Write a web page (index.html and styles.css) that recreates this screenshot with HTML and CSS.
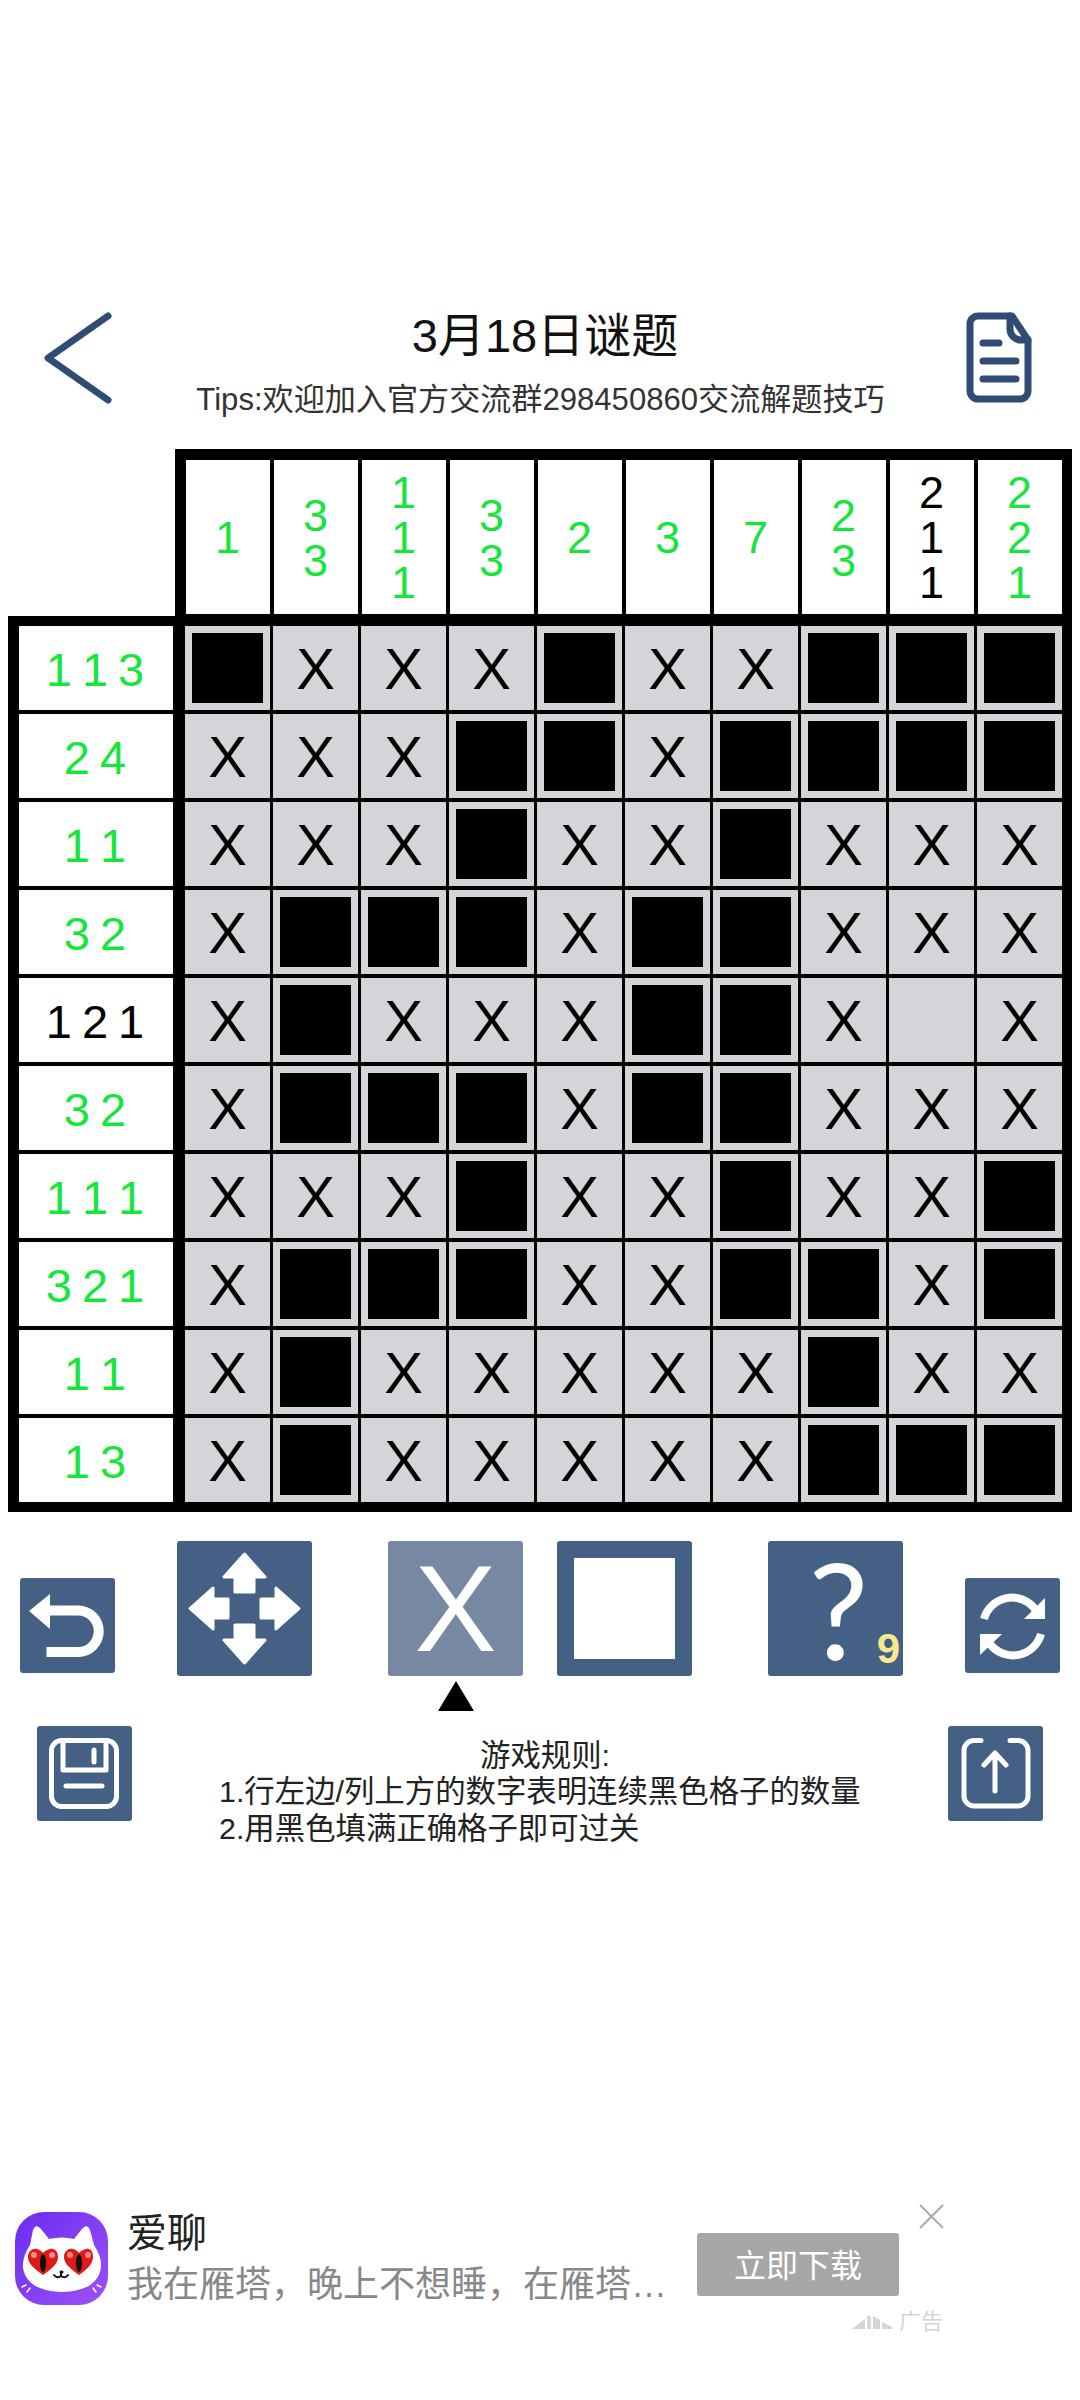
FILE: index.html
```html
<!DOCTYPE html>
<html lang="zh-CN">

<head>
    <meta charset="UTF-8" />
    <meta name="viewport" content="width=device-width, initial-scale=1.0" />
    <title>3月18日谜题</title>
    <link rel="stylesheet" href="styles.css">
</head>

<body>
    <header class="header">
        <svg class="back-icon" width="68" height="92" viewBox="0 0 68 92">
            <path d="M64 4 L4 46 L64 88" />
        </svg>
        <div class="heading">
            <h1 class="title">3月18日谜题</h1>
            <p class="tips">Tips:欢迎加入官方交流群298450860交流解题技巧</p>
        </div>
        <svg class="doc-icon" width="66" height="91" viewBox="0 0 66 91">
            <path d="M46 4 H12 a8 8 0 0 0 -8 8 V79 a8 8 0 0 0 8 8 H54 a8 8 0 0 0 8 -8 V28 Z" />
            <path d="M44 4 V17 a11 11 0 0 0 11 11 H62" />
            <path d="M17 31 H33 M17 49 H50 M17 67 H50" />
        </svg>
    </header>

    <!-- Column clues -->
    <section class="col-clues">
        <div class="col-clue">1</div>
        <div class="col-clue"><span>3</span><span>3</span></div>
        <div class="col-clue"><span>1</span><span>1</span><span>1</span></div>
        <div class="col-clue"><span>3</span><span>3</span></div>
        <div class="col-clue">2</div>
        <div class="col-clue">3</div>
        <div class="col-clue">7</div>
        <div class="col-clue"><span>2</span><span>3</span></div>
        <div class="col-clue done"><span>2</span><span>1</span><span>1</span></div>
        <div class="col-clue"><span>2</span><span>2</span><span>1</span></div>
    </section>

    <section class="board">
        <div class="row-clues">
            <div class="row-clue">1 1 3</div>
            <div class="row-clue">2 4</div>
            <div class="row-clue">1 1</div>
            <div class="row-clue">3 2</div>
            <div class="row-clue done">1 2 1</div>
            <div class="row-clue">3 2</div>
            <div class="row-clue">1 1 1</div>
            <div class="row-clue">3 2 1</div>
            <div class="row-clue">1 1</div>
            <div class="row-clue">1 3</div>
        </div>
        <div class="grid">
            <div class="cell on"></div><div class="cell">X</div><div class="cell">X</div><div class="cell">X</div><div class="cell on"></div><div class="cell">X</div><div class="cell">X</div><div class="cell on"></div><div class="cell on"></div><div class="cell on"></div>
            <div class="cell">X</div><div class="cell">X</div><div class="cell">X</div><div class="cell on"></div><div class="cell on"></div><div class="cell">X</div><div class="cell on"></div><div class="cell on"></div><div class="cell on"></div><div class="cell on"></div>
            <div class="cell">X</div><div class="cell">X</div><div class="cell">X</div><div class="cell on"></div><div class="cell">X</div><div class="cell">X</div><div class="cell on"></div><div class="cell">X</div><div class="cell">X</div><div class="cell">X</div>
            <div class="cell">X</div><div class="cell on"></div><div class="cell on"></div><div class="cell on"></div><div class="cell">X</div><div class="cell on"></div><div class="cell on"></div><div class="cell">X</div><div class="cell">X</div><div class="cell">X</div>
            <div class="cell">X</div><div class="cell on"></div><div class="cell">X</div><div class="cell">X</div><div class="cell">X</div><div class="cell on"></div><div class="cell on"></div><div class="cell">X</div><div class="cell"></div><div class="cell">X</div>
            <div class="cell">X</div><div class="cell on"></div><div class="cell on"></div><div class="cell on"></div><div class="cell">X</div><div class="cell on"></div><div class="cell on"></div><div class="cell">X</div><div class="cell">X</div><div class="cell">X</div>
            <div class="cell">X</div><div class="cell">X</div><div class="cell">X</div><div class="cell on"></div><div class="cell">X</div><div class="cell">X</div><div class="cell on"></div><div class="cell">X</div><div class="cell">X</div><div class="cell on"></div>
            <div class="cell">X</div><div class="cell on"></div><div class="cell on"></div><div class="cell on"></div><div class="cell">X</div><div class="cell">X</div><div class="cell on"></div><div class="cell on"></div><div class="cell">X</div><div class="cell on"></div>
            <div class="cell">X</div><div class="cell on"></div><div class="cell">X</div><div class="cell">X</div><div class="cell">X</div><div class="cell">X</div><div class="cell">X</div><div class="cell on"></div><div class="cell">X</div><div class="cell">X</div>
            <div class="cell">X</div><div class="cell on"></div><div class="cell">X</div><div class="cell">X</div><div class="cell">X</div><div class="cell">X</div><div class="cell">X</div><div class="cell on"></div><div class="cell on"></div><div class="cell on"></div>
        </div>
    </section>

    <section class="tools">
        <button class="btn small undo">
            <svg class="line-icon thick" width="95" height="94" viewBox="0 0 95 94">
                <path d="M28 31.5 H58 a20.75 20.75 0 0 1 0 41.5 H26.5" />
                <path class="solid" d="M30 15 L9 32 L30 50 Z" />
            </svg>
        </button>
        <button class="btn large">
            <svg width="135" height="135" viewBox="0 0 135 135">
                <defs>
                    <path id="move-arrow" d="M67.5 13 L88 36 H77 V51 H58 V36 H47 Z" />
                </defs>
                <g class="move-arrows">
                    <use href="#move-arrow" />
                    <use href="#move-arrow" transform="rotate(90 67.5 67.5)" />
                    <use href="#move-arrow" transform="rotate(180 67.5 67.5)" />
                    <use href="#move-arrow" transform="rotate(270 67.5 67.5)" />
                </g>
            </svg>
        </button>
        <div class="tool-active">
            <button class="btn large selected">X</button>
            <div class="pointer"></div>
        </div>
        <button class="btn large square-tool"><span class="square-inner"></span></button>
        <button class="btn large hint">?<span class="hint-count">9</span></button>
        <button class="btn small refresh">
            <svg class="line-icon thick thinner" width="95" height="94" viewBox="0 0 95 94">
                <path d="M19 40 A29 29 0 0 1 70 30" />
                <path class="solid" d="M80 19 V40 H59 Z" />
                <path d="M76 55 A29 29 0 0 1 25 65" />
                <path class="solid" d="M15 76 V55 H37 Z" />
            </svg>
        </button>
    </section>

    <section class="rules-row">
        <button class="btn small">
            <svg class="line-icon" width="95" height="95" viewBox="0 0 95 95">
                <rect x="14.5" y="14.5" width="65" height="66" rx="10" />
                <path d="M26 15 V44 H69 V15" />
                <path d="M57 24 V36 M29 60 H65" />
            </svg>
        </button>
        <div class="rules">
            <div class="rules-title">游戏规则:</div>
            <div>1.行左边/列上方的数字表明连续黑色格子的数量</div>
            <div>2.用黑色填满正确格子即可过关</div>
        </div>
        <button class="btn small">
            <svg class="line-icon" width="95" height="95" viewBox="0 0 95 95">
                <path d="M33 14.5 H26 a10 10 0 0 0 -10 10 V70 a10 10 0 0 0 10 10 H70 a10 10 0 0 0 10 -10 V24.5 a10 10 0 0 0 -10 -10 H62" />
                <path d="M47 65 V27 M36 39 L47 27 L58 39" />
            </svg>
        </button>
    </section>

    <section class="ad">
        <svg class="ad-icon" width="93" height="93" viewBox="0 0 93 93">
            <defs>
                <linearGradient id="ad-bg" x1="0" y1="0" x2="1" y2="1">
                    <stop offset="0" stop-color="#6a2cf0" />
                    <stop offset="1" stop-color="#9c52f6" />
                </linearGradient>
            </defs>
            <rect width="93" height="93" rx="29" fill="url(#ad-bg)" />
            <path fill="#fff" d="M15 33 L18 18 Q21 11 26 17 L34 27 Q47 24 59 27 L67 17 Q72 11 75 18 L79 33 Q87 45 86 56 Q82 79 47 80 Q12 79 8 56 Q7 45 15 33 Z" />
            <path fill="#e01818" d="M28 63 C18 56 13 51 13 45 C13 39 18 36 22 37 C25 38 27 39 28 41 C29 39 32 38 35 37 C40 36 43 40 43 45 C43 51 38 56 28 63 Z" />
            <path fill="#e01818" d="M64 63 C54 56 49 51 49 45 C49 39 54 36 58 37 C61 38 63 39 64 41 C65 39 68 38 71 37 C76 36 78 40 78 45 C78 51 74 56 64 63 Z" />
            <circle cx="19" cy="43" r="3" fill="#ff8a8a" />
            <circle cx="37" cy="43" r="3" fill="#ff8a8a" />
            <circle cx="55" cy="43" r="3" fill="#ff8a8a" />
            <circle cx="73" cy="43" r="3" fill="#ff8a8a" />
            <ellipse cx="28" cy="51" rx="3" ry="9" fill="#111" />
            <ellipse cx="64" cy="51" rx="3" ry="9" fill="#111" />
            <path d="M39 63 q3 4 7 1 q4 3 7 -1 M46 60 v4" fill="none" stroke="#111" stroke-width="2" stroke-linecap="round" />
            <path d="M46 60 h1" stroke="#111" stroke-width="3" stroke-linecap="round" />
            <path d="M11 73 l-4 2 M15 76 l-3 4 M82 73 l4 2 M78 76 l3 4" stroke="#fff" stroke-width="1.5" stroke-linecap="round" />
        </svg>
        <div class="ad-text">
            <div class="ad-name">爱聊</div>
            <div class="ad-desc">我在雁塔&#xFF0C;晚上不想睡&#xFF0C;在雁塔…</div>
        </div>
        <button class="ad-btn">立即下载</button>
        <svg class="ad-close" width="25" height="25" viewBox="0 0 25 25">
            <path d="M1 1 L24 24 M24 1 L1 24" />
        </svg>
        <div class="ad-mark">
            <svg width="40" height="14" viewBox="0 0 40 14">
                <path d="M0 14 L13 4 V14 Z M15 14 V0 L19 2 V14 Z M21 14 V1 L28 5 V14 Z M30 14 V7 L40 12 V14 Z" />
            </svg>
            <span>广告</span>
        </div>
    </section>
</body>

</html>
```

FILE: styles.css
```css
* {
    box-sizing: border-box;
}

body {
    margin: 0;
    background: #ffffff;
    font-family: "Liberation Sans", "Noto Sans CJK SC", sans-serif;
}

/* Header */

.header {
    display: flex;
    height: 141px;
    margin-top: 308px;
    padding: 0 48px 0 44px;
}

.back-icon,
.doc-icon {
    flex: none;
    margin-top: 4px;
    fill: none;
    stroke: #2f4d74;
    stroke-linecap: round;
    stroke-linejoin: round;
}

.back-icon {
    stroke-width: 7;
}

.doc-icon {
    stroke-width: 7;
}

.heading {
    flex: 1;
    text-align: center;
}

.title {
    margin: 0 0 0 12px;
    font-size: 47px;
    font-weight: normal;
    line-height: 56px;
    color: #111;
}

.tips {
    margin: 16px 0 0 3px;
    font-size: 31.1px;
    line-height: 40px;
    color: #333;
}

/* Board */

.col-clues {
    display: flex;
    gap: 4px;
    width: 897px;
    margin-left: 175px;
    padding: 11px 10px 2px 11px;
    background: #000;
}

.col-clue {
    display: flex;
    flex-direction: column;
    justify-content: center;
    width: 84px;
    height: 154px;
    padding: 1px 1px 0 0;
    font-size: 45px;
    line-height: 45px;
    text-align: center;
    color: #17e53b;
    background: #fff;
}

.col-clue.done,
.row-clue.done {
    color: #000;
}

.board {
    display: flex;
    gap: 12px;
    width: 1064px;
    margin-left: 8px;
    padding: 10px 10px 10px 11px;
    background: #000;
}

.row-clues {
    display: flex;
    flex-direction: column;
    gap: 4px;
    width: 154px;
}

.row-clue {
    display: flex;
    align-items: center;
    justify-content: center;
    height: 84px;
    padding: 2px 2px 0 0;
    font-size: 47px;
    word-spacing: -3px;
    color: #17e53b;
    background: #fff;
}

.grid {
    display: grid;
    grid-template-columns: repeat(10, 85px);
    grid-auto-rows: 84px;
    gap: 4px 3px;
}

.cell {
    display: flex;
    align-items: center;
    justify-content: center;
    font-size: 58px;
    color: #000;
    background: #d4d5d9;
}

.cell.on {
    padding: 7px;
}

.cell.on::after {
    content: "";
    width: 100%;
    height: 100%;
    background: #000;
}

/* Tool buttons */

.btn {
    position: relative;
    flex: none;
    display: flex;
    align-items: center;
    justify-content: center;
    padding: 0;
    border: none;
    border-radius: 3px;
    font-family: inherit;
    color: #fff;
    background: #446085;
}

.btn.small {
    width: 95px;
    height: 95px;
}

.btn.large {
    width: 135px;
    height: 135px;
}

.tools {
    display: flex;
    align-items: flex-start;
    height: 170px;
    margin-top: 29px;
    padding-left: 20px;
}

.btn.undo {
    margin: 37px 62px 0 0;
}

.btn.refresh {
    margin: 37px 0 0 62px;
}

.move-arrows {
    fill: #fff;
    stroke: #fff;
    stroke-width: 3;
    stroke-linejoin: round;
}

.tool-active {
    display: flex;
    flex-direction: column;
    align-items: center;
    gap: 5px;
    margin: 0 34px 0 76px;
}

.btn.selected {
    font-size: 123px;
    background: #7788a2;
}

.pointer {
    width: 0;
    height: 0;
    border-left: 18px solid transparent;
    border-right: 18px solid transparent;
    border-bottom: 30px solid #000;
}

.square-inner {
    width: 101px;
    height: 101px;
    background: #fff;
}

.btn.hint {
    margin-left: 76px;
    padding-left: 6px;
    font-family: Lato, "Liberation Sans", sans-serif;
    font-size: 134px;
    line-height: 1;
}

.hint-count {
    position: absolute;
    right: 3px;
    bottom: 6px;
    font-family: "Liberation Sans", sans-serif;
    font-size: 42px;
    font-weight: bold;
    line-height: 1;
    color: #f7e98e;
}

.line-icon {
    fill: none;
    stroke: #fff;
    stroke-width: 5;
    stroke-linecap: round;
    stroke-linejoin: round;
}

.line-icon.thick {
    stroke-width: 10;
    stroke-linecap: butt;
    stroke-linejoin: miter;
}

.line-icon.thinner {
    stroke-width: 8;
}

.line-icon .solid {
    fill: #fff;
    stroke: none;
}

.rules-row {
    display: flex;
    align-items: flex-start;
    margin-top: 15px;
    padding: 0 37px;
}

.rules {
    flex: 1;
    padding: 11px 0 0 87px;
    font-size: 30.4px;
    line-height: 36.4px;
    color: #222;
}

.rules-title {
    width: 640px;
    padding-left: 12px;
    text-align: center;
}

/* Ad */

.ad {
    position: relative;
    display: flex;
    align-items: flex-start;
    height: 128px;
    margin-top: 358px;
    padding-left: 15px;
}

.ad-icon {
    flex: none;
    margin-top: 8px;
}

.ad-text {
    flex: none;
    width: 540px;
    margin-left: 19px;
    white-space: nowrap;
}

.ad-name {
    margin-top: 4px;
    font-size: 40px;
    line-height: 50px;
    color: #222;
}

.ad-desc {
    margin-top: 2px;
    font-size: 36px;
    line-height: 50px;
    color: #888;
}

.ad-btn {
    flex: none;
    width: 202px;
    height: 63px;
    margin: 29px 0 0 30px;
    padding: 0 0 3px;
    border: none;
    border-radius: 3px;
    font-family: inherit;
    font-size: 32px;
    color: #fff;
    background: #a6a6a6;
}

.ad-close {
    flex: none;
    margin-left: 20px;
    fill: none;
    stroke: #aaa;
    stroke-width: 2;
}

.ad-mark {
    position: absolute;
    left: 852px;
    top: 106px;
    display: flex;
    align-items: center;
    gap: 7px;
    font-size: 22px;
    line-height: 24px;
    color: #d5d5d5;
    fill: #d5d5d5;
}
```
